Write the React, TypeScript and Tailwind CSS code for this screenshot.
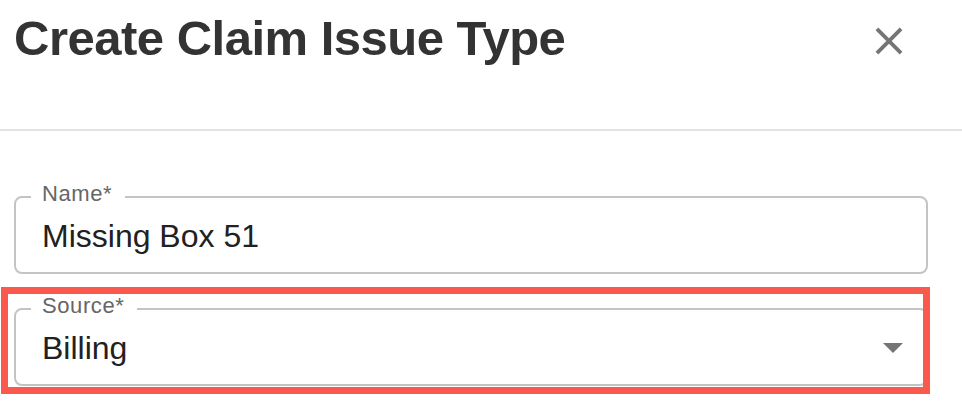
import React from "react";

function CloseIcon() {
  return (
    <svg width="46" height="46" viewBox="0 0 24 24" fill="#757575" aria-hidden="true">
      <path d="M19 6.41 17.59 5 12 10.59 6.41 5 5 6.41 10.59 12 5 17.59 6.41 19 12 13.41 17.59 19 19 17.59 13.41 12z" />
    </svg>
  );
}

function ArrowDown() {
  return (
    <svg width="20" height="10" viewBox="0 0 20 10" fill="#757575" aria-hidden="true">
      <path d="M0 0h20L10 10z" />
    </svg>
  );
}

interface FieldProps {
  label: string;
  value: string;
  select?: boolean;
  className?: string;
}

function OutlinedField({ label, value, select, className }: FieldProps) {
  return (
    <fieldset
      className={
        "border-2 border-[#c4c4c4] rounded-[8px] pl-[15px] min-w-0 " + (className ?? "")
      }
    >
      <legend className="pl-[11px] pr-[13px] pb-[6px] text-[22px] leading-[22px] tracking-[0.6px] text-[#666]">
        {label}
      </legend>
      <div className="h-[61px] pt-[9px] pl-[11px] pr-[23px] flex items-start justify-between">
        <span className="text-[32px] leading-[32px] text-[#212121]">{value}</span>
        {select && (
          <span className="h-[32px] flex items-center">
            <ArrowDown />
          </span>
        )}
      </div>
    </fieldset>
  );
}

export default function App() {
  return (
    <div className="relative w-[962px] h-[408px] overflow-hidden bg-white font-['Liberation_Sans',Arial,sans-serif]">
      <div className="h-[129px] flex items-start justify-between pl-[14px] pr-[50px]">
        <h1 className="mt-[14px] text-[49px] leading-[49px] font-bold tracking-[-0.5px] text-[#333]">
          Create Claim Issue Type
        </h1>
        <button className="mt-[18px]">
          <CloseIcon />
        </button>
      </div>
      <div className="h-[2px] bg-[#e2e2e2]" />

      <div className="pt-[52px] pl-[14px] pr-[34px]">
        <OutlinedField label="Name*" value="Missing Box 51" />
        <OutlinedField label="Source*" value="Billing" select className="mt-[21px]" />
      </div>

      {/* highlight annotation around the Source field */}
      <div className="absolute left-[1px] top-[287px] w-[929px] h-[107px] border-[7px] border-[#fa5a4d] pointer-events-none" />
    </div>
  );
}
